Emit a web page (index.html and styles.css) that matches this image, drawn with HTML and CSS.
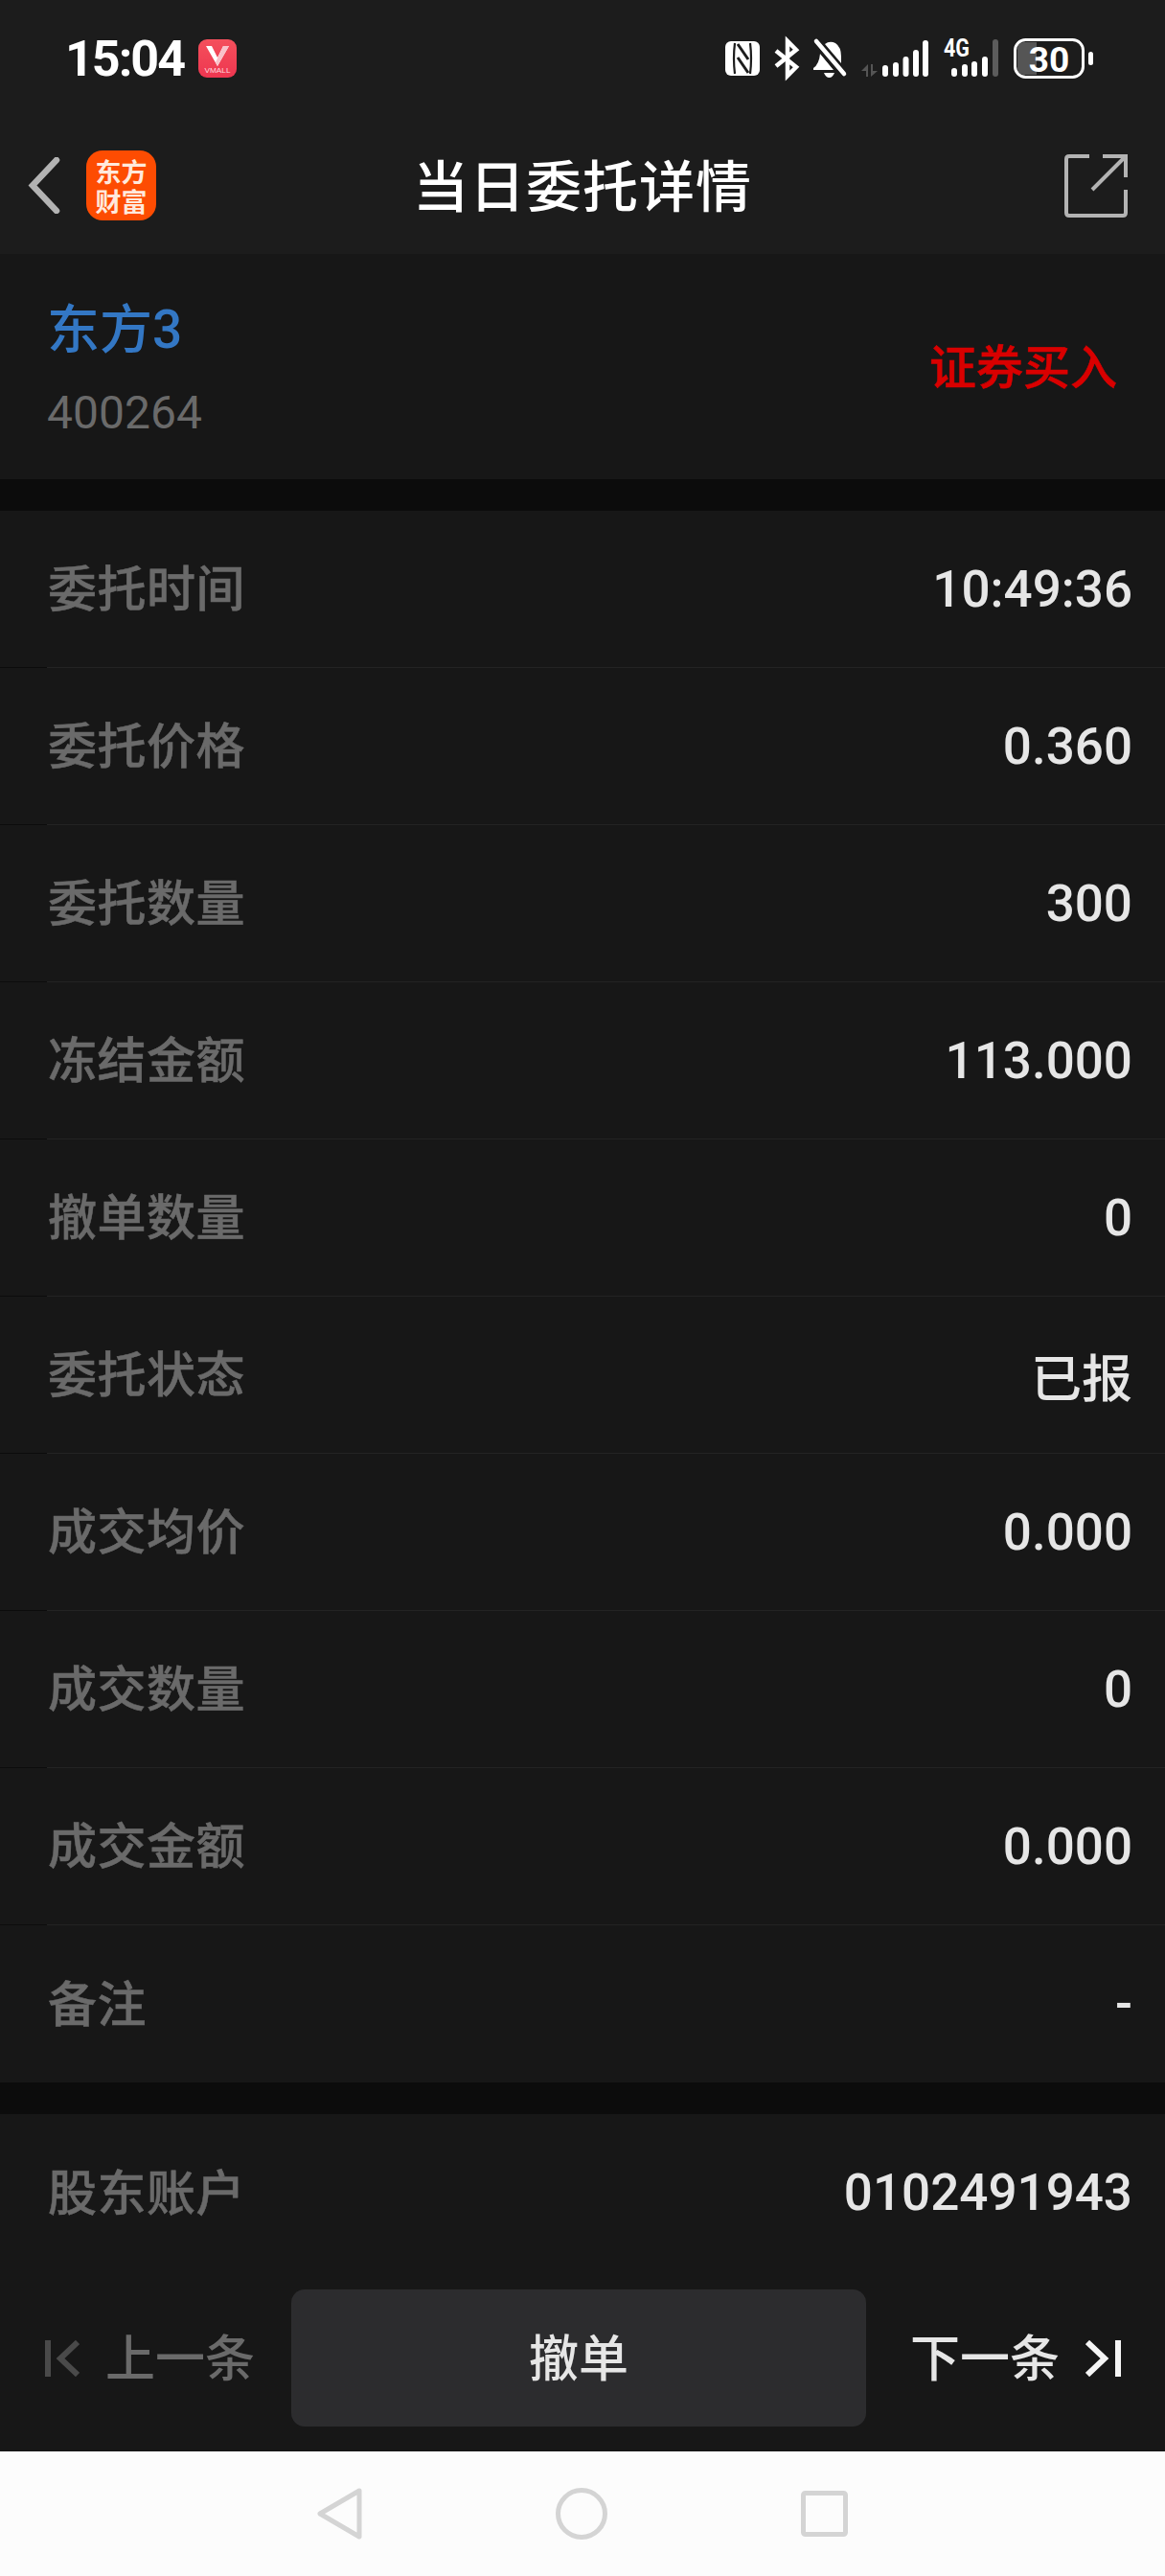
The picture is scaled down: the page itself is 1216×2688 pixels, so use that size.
FILE: index.html
```html
<!DOCTYPE html>
<html lang="zh-CN">
<head>
<meta charset="utf-8">
<title>当日委托详情</title>
<link rel="stylesheet" href="styles.css">
</head>
<body>
<div class="phone">

  <div class="statusbar">
    <span class="clock">15:04</span>
    <svg class="vmall" width="40" height="40" viewBox="0 0 40 40">
      <defs>
        <linearGradient id="vm" x1="0" y1="0" x2="0" y2="1">
          <stop offset="0" stop-color="#f4505c"/>
          <stop offset="1" stop-color="#ee3650"/>
        </linearGradient>
      </defs>
      <rect width="40" height="40" rx="9" fill="url(#vm)"/>
      <path d="M8 7 H14 L20 19 L26 7 H32 L20 28 Z" fill="#fff"/>
      <path d="M26 7 H32 L20 28 L18 24 Z" fill="#f9c2ca"/>
      <text x="20" y="35" text-anchor="middle" textLength="27" lengthAdjust="spacingAndGlyphs" class="vmall-text">VMALL</text>
    </svg>
    <div class="status-icons">
      <svg class="ic-nfc" width="36" height="36" viewBox="0 0 36 36">
        <rect width="36" height="36" rx="6" fill="#fff"/>
        <path d="M10 2 Q8 18 10 34 M26 2 Q28 18 26 34" fill="none" stroke="#1c1c1c" stroke-width="2.200"/>
        <path d="M13 3 L24 19 M13 17 L24 33" fill="none" stroke="#1c1c1c" stroke-width="3"/>
      </svg>
      <svg class="ic-bt" width="28" height="40" viewBox="0 0 28 40">
        <path d="M2 12 L23 29 L14 38 V2 L23 11 L2 28" fill="none" stroke="#fff" stroke-width="4.500"/>
      </svg>
      <svg class="ic-bell" width="34" height="40" viewBox="0 0 34 40">
        <path d="M12 5 Q17 1 23 4 Q29 8 29 18 L29 25 Z M7 15 L21 32 H0 V30 Q6 26 7 15 Z" fill="#fff"/>
        <path d="M11 35 H22 Q20 40 16.500 40 Q13 40 11 35 Z" fill="#fff"/>
        <path d="M3 2 L32 36" stroke="#fff" stroke-width="4.500" stroke-linecap="round"/>
        <path d="M1 6 L29 39" stroke="#1c1c1c" stroke-width="2"/>
      </svg>
      <svg class="ic-signal" width="72" height="40" viewBox="0 0 72 40">
        <path d="M0 33 L7 26 V39 H5 V33 Z M10 26 H12 V33 H17 L10 39 Z" fill="#555"/>
        <g fill="#fff">
          <rect x="22" y="27" width="6" height="12" rx="3"/>
          <rect x="33" y="24" width="6" height="15" rx="3"/>
          <rect x="43.500" y="18" width="6" height="21" rx="3"/>
          <rect x="54" y="11" width="6" height="28" rx="3"/>
          <rect x="64" y="1" width="6" height="38" rx="3"/>
        </g>
      </svg>
      <svg class="ic-4g" width="58" height="40" viewBox="0 0 58 40">
        <text x="0" y="18" textLength="27" lengthAdjust="spacingAndGlyphs" class="net-text">4G</text>
        <g fill="#fff">
          <rect x="8" y="30" width="6" height="9" rx="3"/>
          <rect x="19" y="26" width="6" height="13" rx="3"/>
          <rect x="29" y="23" width="6" height="16" rx="3"/>
          <rect x="40" y="18" width="6" height="21" rx="3"/>
        </g>
        <rect x="51" y="0" width="6" height="39" rx="3" fill="#5c5c5c"/>
      </svg>
      <svg class="ic-batt" width="83" height="42" viewBox="0 0 83 42">
        <path d="M11 4 H24 V38 H11 Q4 38 4 31 V11 Q4 4 11 4 Z" fill="#555"/>
        <rect x="1.500" y="1.500" width="71" height="39" rx="11" fill="none" stroke="#fff" stroke-width="3"/>
        <text x="37" y="35" text-anchor="middle" class="batt-text">30</text>
        <rect x="78" y="14" width="5" height="14" rx="2.500" fill="#fff"/>
      </svg>
    </div>
  </div>

  <div class="navbar">
    <svg class="back" width="34" height="59" viewBox="0 0 34 59">
      <path d="M30 3 L5 29.500 L30 56" fill="none" stroke="#b3b3b3" stroke-width="6.500" stroke-linecap="round"/>
    </svg>
    <div class="applogo"><span>东方</span><span>财富</span></div>
    <h1 class="title">当日委托详情</h1>
    <svg class="share" width="66" height="66" viewBox="0 0 66 66">
      <path d="M26 2 H5 Q2 2 2 5 V61 Q2 64 5 64 H61 Q64 64 64 61 V37" fill="none" stroke="#b3b3b3" stroke-width="4"/>
      <path d="M29 37 L64 2 M40 2 H64 V24" fill="none" stroke="#b3b3b3" stroke-width="4"/>
    </svg>
  </div>

  <div class="stock">
    <div>
      <div class="stock-name">东方3</div>
      <div class="stock-code">400264</div>
    </div>
    <div class="stock-side">证券买入</div>
  </div>

  <div class="group">
    <div class="row"><span class="label">委托时间</span><span class="value">10:49:36</span></div>
    <div class="row"><span class="label">委托价格</span><span class="value">0.360</span></div>
    <div class="row"><span class="label">委托数量</span><span class="value">300</span></div>
    <div class="row"><span class="label">冻结金额</span><span class="value">113.000</span></div>
    <div class="row"><span class="label">撤单数量</span><span class="value">0</span></div>
    <div class="row"><span class="label">委托状态</span><span class="value">已报</span></div>
    <div class="row"><span class="label">成交均价</span><span class="value">0.000</span></div>
    <div class="row"><span class="label">成交数量</span><span class="value">0</span></div>
    <div class="row"><span class="label">成交金额</span><span class="value">0.000</span></div>
    <div class="row"><span class="label">备注</span><span class="value">-</span></div>
  </div>

  <div class="group">
    <div class="row"><span class="label">股东账户</span><span class="value">0102491943</span></div>
  </div>

  <div class="actions">
    <div class="pager pager-off">
      <svg width="36" height="38" viewBox="0 0 36 38">
        <path d="M3 0 V38" stroke="#4a4a4a" stroke-width="6"/>
        <path d="M34 2 L16 19 L34 36" fill="none" stroke="#4a4a4a" stroke-width="6"/>
      </svg>
      <span class="pager-text">上一条</span>
    </div>
    <div class="cancel"><span class="pager-text">撤单</span></div>
    <div class="pager pager-next">
      <span class="pager-text">下一条</span>
      <svg width="37" height="38" viewBox="0 0 37 38">
        <path d="M2 2 L20 19 L2 36" fill="none" stroke="#f5f5f5" stroke-width="6"/>
        <path d="M34 0 V38" stroke="#f5f5f5" stroke-width="6"/>
      </svg>
    </div>
  </div>

  <div class="navkeys">
    <svg width="47" height="54" viewBox="0 0 47 54">
      <path d="M44 3 L3 27 L44 51 Z" fill="none" stroke="#d4d4d4" stroke-width="5" stroke-linejoin="round"/>
    </svg>
    <svg width="54" height="54" viewBox="0 0 54 54">
      <circle cx="27" cy="27" r="24.500" fill="none" stroke="#d4d4d4" stroke-width="5"/>
    </svg>
    <svg width="49" height="48" viewBox="0 0 49 48">
      <rect x="2.500" y="2.500" width="44" height="43" rx="2" fill="none" stroke="#d4d4d4" stroke-width="5"/>
    </svg>
  </div>

</div>
</body>
</html>
```

FILE: styles.css
```css
* { box-sizing: border-box; }

html, body { margin: 0; padding: 0; }

body {
  background: #0c0c0c;
  font-family: "Roboto", "Noto Sans CJK SC", sans-serif;
}

.phone {
  width: 1216px;
  height: 2688px;
  display: flex;
  flex-direction: column;
  overflow: hidden;
}

/* status bar */
.statusbar {
  height: 122px;
  padding: 41px 75px 0 68px;
  background: #1c1c1c;
  display: flex;
  align-items: flex-start;
}
.clock {
  font-family: "Roboto", sans-serif;
  font-weight: 700;
  font-size: 52px;
  letter-spacing: -2px;
  line-height: 42px;
  color: #fff;
}
.vmall { margin-left: 15px; }
.vmall-text { font-family: "Liberation Sans", sans-serif; font-size: 8px; fill: #ffd9de; }
.status-icons {
  margin-left: auto;
  display: flex;
  align-items: flex-start;
}
.status-icons svg { display: block; overflow: visible; }
.status-icons .ic-nfc { margin-top: 2px; }
.status-icons .ic-bt { margin-left: 15px; }
.status-icons .ic-bell { margin-left: 13px; }
.status-icons .ic-signal { margin-left: 16px; }
.status-icons .ic-4g { margin-left: 14px; }
.status-icons .ic-batt { margin: -1px 0 0 15px; }
.net-text { font-family: "Roboto", sans-serif; font-weight: 700; font-size: 25px; fill: #fff; }
.batt-text { font-family: "Roboto", sans-serif; font-weight: 700; font-size: 37px; fill: #fff; }

/* nav bar */
.navbar {
  height: 143px;
  background: #1c1c1c;
  padding: 0 39px 0 29px;
  display: flex;
  align-items: center;
  position: relative;
}
.applogo {
  width: 73px;
  height: 73px;
  margin-left: 27px;
  background: #fd4c02;
  border-radius: 17px;
  color: #ffe9dc;
  font-family: "Noto Sans CJK SC", sans-serif;
  font-weight: bold;
  font-size: 27px;
  line-height: 31px;
  display: flex;
  flex-direction: column;
  align-items: center;
  justify-content: center;
}
.title {
  margin: 0;
  position: absolute;
  left: 200px;
  right: 200px;
  top: 29px;
  text-align: center;
  font-family: "Noto Sans CJK SC", sans-serif;
  font-weight: 500;
  font-size: 58px;
  letter-spacing: 1px;
  line-height: 80px;
  color: #fff;
}
.share { margin-left: auto; }

/* stock header */
.stock {
  height: 235px;
  background: #171717;
  padding: 5px 50px 0 49px;
  display: flex;
  justify-content: space-between;
  align-items: center;
}
.stock-name {
  font-family: "Roboto", "Noto Sans CJK SC", sans-serif;
  font-weight: 500;
  font-size: 55px;
  line-height: 60px;
  color: #3377c4;
}
.stock-code {
  margin-top: 32px;
  font-size: 48px;
  line-height: 50px;
  color: #6a6a6a;
}
.stock-side {
  font-family: "Noto Sans CJK SC", sans-serif;
  font-weight: 500;
  font-size: 49px;
  color: #d90000;
  -webkit-text-stroke: 0.6px #d90000;
  margin-top: -12px;
}

/* detail rows */
.group {
  margin-top: 33px;
  background: #171717;
}
.row {
  height: 164px;
  padding: 0 34px 0 50px;
  border-bottom: 1px solid #232323;
  border-image: linear-gradient(to right, #0c0c0c 50px, #232323 50px) 1;
  display: flex;
  justify-content: space-between;
  align-items: center;
}
.row:last-child { border-bottom: 0; }
.label {
  font-family: "Noto Sans CJK SC", sans-serif;
  font-weight: 500;
  font-size: 51px;
  letter-spacing: 0.5px;
  line-height: 60px;
  margin-top: -7px;
  color: #6a6a6a;
  -webkit-text-stroke: 0.5px #6a6a6a;
}
.value {
  font-family: "Roboto", "Noto Sans CJK SC", sans-serif;
  font-weight: 500;
  font-size: 53px;
  color: #e6e6e6;
}

/* bottom actions */
.actions {
  height: 188px;
  background: #171717;
  display: grid;
  grid-template-columns: 304px 600px 1fr;
  align-items: start;
  padding-top: 19px;
}
.pager {
  height: 143px;
  font-family: "Noto Sans CJK SC", sans-serif;
  font-weight: 500;
  font-size: 52px;
  color: #e6e6e6;
  display: flex;
  align-items: center;
  gap: 27px;
}
.pager-text { margin-top: -6px; }
.pager-off { color: #6a6a6a; padding-left: 47px; }
.pager-next { padding-left: 46px; }
.cancel {
  height: 143px;
  border-radius: 14px;
  background: #2c2c2e;
  color: #e6e6e6;
  font-family: "Noto Sans CJK SC", sans-serif;
  font-weight: 500;
  font-size: 52px;
  display: flex;
  align-items: center;
  justify-content: center;
}

/* android nav keys */
.navkeys {
  height: 130px;
  background: #fcfcfc;
  display: flex;
  align-items: center;
  justify-content: center;
  gap: 202px;
}
```
